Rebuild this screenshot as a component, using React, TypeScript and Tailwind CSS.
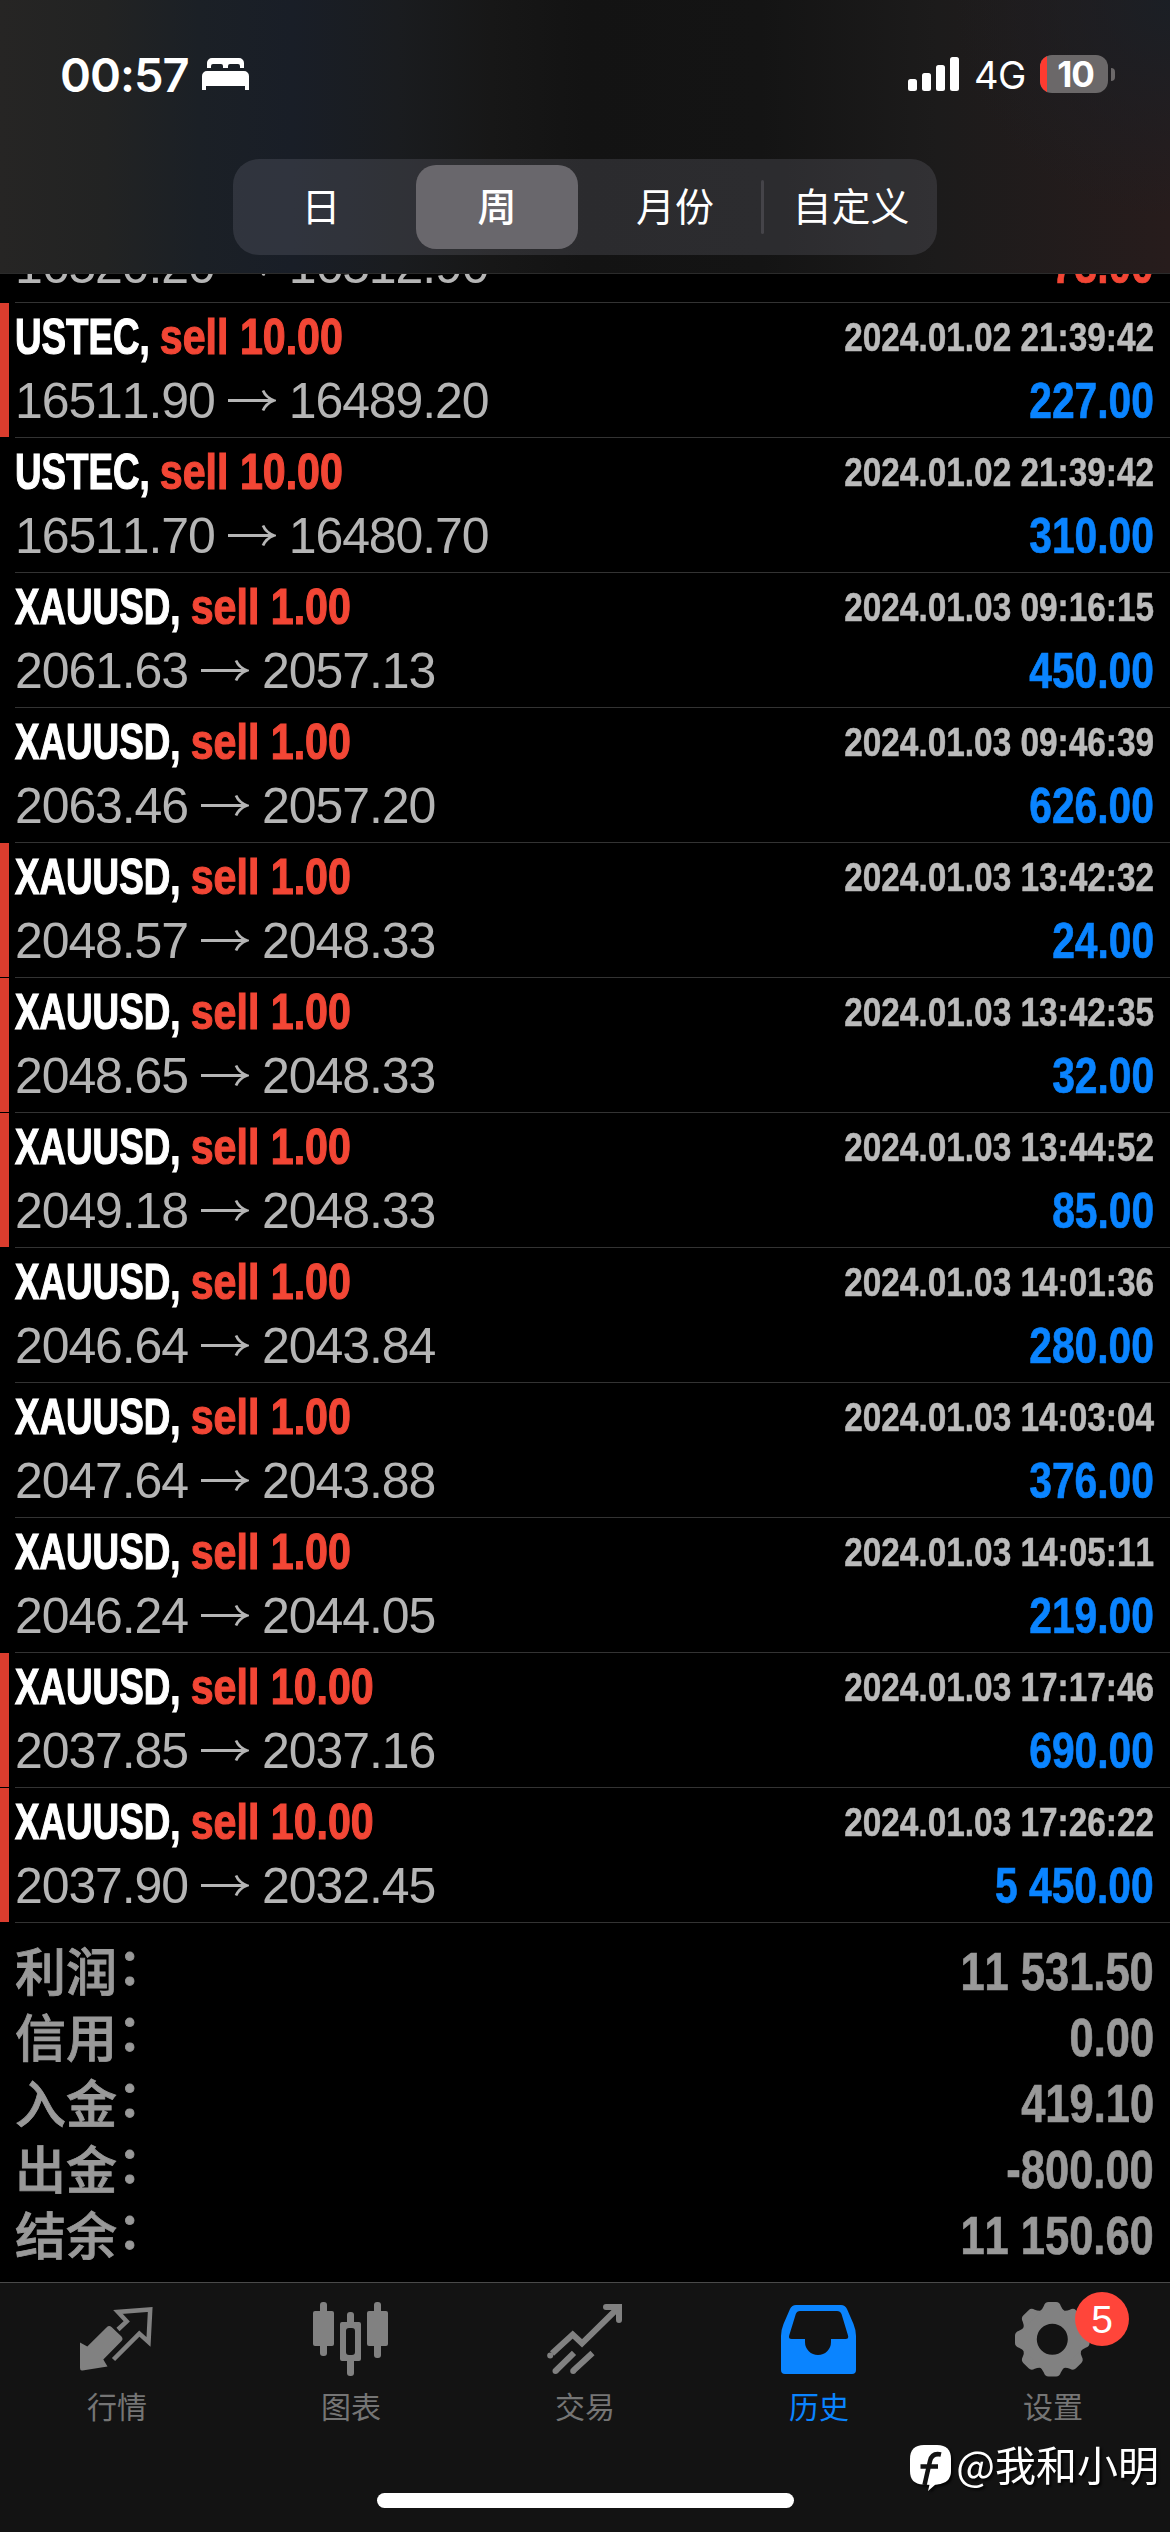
import React from 'react';

interface Deal {
  symbol: string;
  volume: string;
  open: string;
  close: string;
  time: string;
  profit: string;
  marked?: boolean;
}

const deals: Deal[] = [
  { symbol: 'USTEC', volume: '10.00', open: '16511.90', close: '16489.20', time: '2024.01.02 21:39:42', profit: '227.00', marked: true },
  { symbol: 'USTEC', volume: '10.00', open: '16511.70', close: '16480.70', time: '2024.01.02 21:39:42', profit: '310.00' },
  { symbol: 'XAUUSD', volume: '1.00', open: '2061.63', close: '2057.13', time: '2024.01.03 09:16:15', profit: '450.00' },
  { symbol: 'XAUUSD', volume: '1.00', open: '2063.46', close: '2057.20', time: '2024.01.03 09:46:39', profit: '626.00' },
  { symbol: 'XAUUSD', volume: '1.00', open: '2048.57', close: '2048.33', time: '2024.01.03 13:42:32', profit: '24.00', marked: true },
  { symbol: 'XAUUSD', volume: '1.00', open: '2048.65', close: '2048.33', time: '2024.01.03 13:42:35', profit: '32.00', marked: true },
  { symbol: 'XAUUSD', volume: '1.00', open: '2049.18', close: '2048.33', time: '2024.01.03 13:44:52', profit: '85.00', marked: true },
  { symbol: 'XAUUSD', volume: '1.00', open: '2046.64', close: '2043.84', time: '2024.01.03 14:01:36', profit: '280.00' },
  { symbol: 'XAUUSD', volume: '1.00', open: '2047.64', close: '2043.88', time: '2024.01.03 14:03:04', profit: '376.00' },
  { symbol: 'XAUUSD', volume: '1.00', open: '2046.24', close: '2044.05', time: '2024.01.03 14:05:11', profit: '219.00' },
  { symbol: 'XAUUSD', volume: '10.00', open: '2037.85', close: '2037.16', time: '2024.01.03 17:17:46', profit: '690.00', marked: true },
  { symbol: 'XAUUSD', volume: '10.00', open: '2037.90', close: '2032.45', time: '2024.01.03 17:26:22', profit: '5 450.00', marked: true },
];

const totals = [
  { label: '利润：', value: '11 531.50' },
  { label: '信用：', value: '0.00' },
  { label: '入金：', value: '419.10' },
  { label: '出金：', value: '-800.00' },
  { label: '结余：', value: '11 150.60' },
];

const periods = ['日', '周', '月份', '自定义'];

const StatusBar: React.FC = () => (
  <div className="flex h-[148px] items-center justify-between pl-[60px] pr-[55px]">
    <div className="flex items-center gap-[13px]">
      <span className="font-['Inter',sans-serif] text-[47px] font-semibold leading-none tracking-[-1px]">00:57</span>
      <svg className="h-[32px] w-[47px]" viewBox="0 0 47 32" fill="currentColor">
        <path d="M5 10V5a5 5 0 0 1 5-5h27a5 5 0 0 1 5 5v5h-4V8a2 2 0 0 0-2-2h-8a2 2 0 0 0-2 2v2h-5V8a2 2 0 0 0-2-2h-8a2 2 0 0 0-2 2v2z" />
        <path d="M0 32V18a5 5 0 0 1 5-5h37a5 5 0 0 1 5 5v14h-4v-4H4v4z" />
      </svg>
    </div>
    <div className="flex items-center">
      <svg className="h-[34px] w-[52px]" viewBox="0 0 52 34" fill="currentColor">
        <rect x="0" y="22" width="9" height="12" rx="2.5" />
        <rect x="14" y="16" width="9" height="18" rx="2.5" />
        <rect x="28" y="8" width="9" height="26" rx="2.5" />
        <rect x="42" y="0" width="9" height="34" rx="2.5" />
      </svg>
      <span className="ml-[14px] w-[66px] pt-[2px] font-['Inter',sans-serif] text-[38px] leading-none tracking-[-0.5px]">4G</span>
      <div className="flex h-[38px] w-[68px] overflow-hidden rounded-[12px] bg-[#6b6869]">
        <div className="w-[7px] bg-[#ff3b30]" />
        <span className="flex-1 pr-1 text-center font-['Inter',sans-serif] text-[35px] font-bold leading-[38px] tracking-[-1px]">10</span>
      </div>
      <div className="ml-[3px] h-[13px] w-[4px] rounded-r-full bg-[#6b6869]" />
    </div>
  </div>
);

const PeriodPicker: React.FC = () => (
  <div className="mx-auto mt-[11px] flex h-[96px] w-[704px] items-center rounded-[26px] bg-[#8e8e9c]/20 font-['Noto_Sans_CJK_SC',sans-serif] text-[39px]">
    {periods.map((p, i) => (
      <React.Fragment key={p}>
        {i === 3 && <div className="-mr-[3px] h-[54px] w-[3px] rounded-full bg-[#454449]" />}
        <div
          className={
            p === '周'
              ? 'mx-[7px] flex h-[84px] w-[162px] items-center justify-center rounded-[20px] bg-[#69676c] pb-[6px] font-medium'
              : i > 1
                ? 'flex w-[176px] items-center justify-center pb-[6px] pl-[4px]'
                : 'flex w-[176px] items-center justify-center pb-[6px]'
          }
        >
          {p}
        </div>
      </React.Fragment>
    ))}
  </div>
);

const Arrow: React.FC = () => (
  <svg className="mx-[13px] h-[24px] w-[48px]" viewBox="0 0 48 24" fill="none" stroke="currentColor" strokeWidth="2.8">
    <path d="M0 11.500H46M35 1.500Q38 8.500 46 11.500Q38 14.500 35 21.500" />
  </svg>
);

const PriceRow: React.FC<{ open: string; close: string; profit: string; loss?: boolean }> = ({ open, close, profit, loss }) => (
  <div className="flex h-[59px] items-center justify-between">
    <div className="flex items-center text-[50px] tracking-[-1.1px] text-[#b5b5b5]">
      <span>{open}</span>
      <Arrow />
      <span>{close}</span>
    </div>
    <span
      className={`origin-right scale-x-[.815] text-[50px] font-bold [-webkit-text-stroke:0.7px] ${loss ? 'text-[#f24635]' : 'text-[#0a84ff]'}`}
    >
      {profit}
    </span>
  </div>
);

const DealRow: React.FC<{ deal: Deal }> = ({ deal }) => (
  <div className="flex h-[135px]">
    <div className={`mb-px w-[9px] ${deal.marked ? 'bg-[#db3d2e]' : ''}`} />
    <div className="ml-[6px] flex-1 border-b border-[#333333] pr-[16px]">
      <div className="flex h-[68px] items-center justify-between font-bold">
        <div className="origin-left scale-x-[.735] whitespace-pre text-[50px] [-webkit-text-stroke:1.2px]">
          {deal.symbol},{' '}
          <span className="inline-block origin-left scale-x-[1.12] text-[#f24635]">sell {deal.volume}</span>
        </div>
        <span className="origin-right scale-x-[.824] text-[40.5px] text-[#bbbbbb] [-webkit-text-stroke:0.5px]">{deal.time}</span>
      </div>
      <PriceRow open={deal.open} close={deal.close} profit={deal.profit} />
    </div>
  </div>
);

const QuotesIcon = () => (
  <svg className="h-[80px] w-[80px]" viewBox="0 0 80 80">
    <path d="M3 42.500L10.300 46.500L29.500 27.500Q32 25 34.500 27L44.500 36.500Q46.500 39 44.500 41L26.300 59.500L30.500 66.500L5.500 70.500Q3 71 3 68z" fill="currentColor" />
    <path d="M41 29.500L49.700 21.300L41 12L73.200 9.500L71.500 42L62.300 33.700L36.500 59.500" fill="none" stroke="currentColor" strokeWidth="4.500" />
  </svg>
);

const ChartIcon = () => (
  <svg className="h-[80px] w-[80px]" viewBox="0 0 80 80" fill="currentColor">
    <rect x="9" y="2" width="7" height="54" rx="3" />
    <rect x="2" y="11" width="21" height="35" rx="2" />
    <rect x="36" y="12" width="7" height="14" rx="3" />
    <rect x="36" y="58" width="7" height="18" rx="3" />
    <path fillRule="evenodd" d="M31 22h17a2 2 0 0 1 2 2v35a2 2 0 0 1-2 2h-17a2 2 0 0 1-2-2v-35a2 2 0 0 1 2-2zM38 28a3 3 0 0 0-3 3v21a3 3 0 0 0 3 3h3a3 3 0 0 0 3-3v-21a3 3 0 0 0-3-3z" />
    <rect x="63" y="2" width="7" height="56" rx="3" />
    <rect x="56" y="11" width="21" height="35" rx="2" />
  </svg>
);

const TradeIcon = () => (
  <svg className="h-[80px] w-[80px]" viewBox="0 0 80 80" fill="none" stroke="currentColor" strokeWidth="6">
    <path d="M7 53.500L27.700 34.500L37 43.300L73 8" />
    <path d="M61 7H74V20" strokeLinecap="round" />
    <path d="M11 70.500L29 52.800M28.500 70.500L47.500 53" />
    <g fill="currentColor" stroke="none">
      <circle cx="5.200" cy="55.500" r="3" />
      <circle cx="10.500" cy="71" r="3" />
      <circle cx="28.200" cy="71" r="3" />
    </g>
  </svg>
);

const HistoryIcon = () => (
  <svg className="h-[80px] w-[80px]" viewBox="0 0 80 80" fill="currentColor" fillRule="evenodd">
    <path d="M17 5h45q4 0 6 4l6.500 15q2.500 6 2.500 12v34a4 4 0 0 1-4 4H6a4 4 0 0 1-4-4V36q0-6 2.500-12L11 9q2-4 6-4zM21 11q-3 0-4.200 3L10.200 35.500q-1 3.500 2.500 3.500H26v3a13 13 0 0 0 26 0v-3h14.500q3.500 0 2.500-3.500L62.500 14q-1.200-3-4.500-3z" />
  </svg>
);

const SettingsIcon = () => (
  <svg className="h-[80px] w-[80px]" viewBox="0 0 80 80">
    <circle cx="39.300" cy="39.300" r="23" fill="none" stroke="currentColor" strokeWidth="15" />
    {[0, 45, 90, 135, 180, 225, 270, 315].map((deg) => (
      <path
        key={deg}
        d="M26.500 11.500Q29.500 9.500 30.800 6Q32 2 35.500 2h7.600Q46.600 2 47.800 6Q49.100 9.500 52.100 11.500z"
        transform={`rotate(${deg} 39.3 39.3)`}
        fill="currentColor"
      />
    ))}
  </svg>
);

const tabs = [
  { label: '行情', icon: QuotesIcon },
  { label: '图表', icon: ChartIcon },
  { label: '交易', icon: TradeIcon },
  { label: '历史', icon: HistoryIcon, active: true },
  { label: '设置', icon: SettingsIcon, badge: 5 },
];

const TabBar: React.FC = () => (
  <nav className="flex h-[250px] flex-col border-t border-[#4a4a4a] bg-[#131313]">
    <div className="grid grid-cols-5 pt-[17px]">
      {tabs.map(({ label, icon: Icon, active, badge }) => (
        <div key={label} className={`flex flex-col items-center ${active ? 'text-[#0a84ff]' : 'text-[#818181]'}`}>
          <div className="relative">
            <Icon />
            {badge && (
              <span className="absolute left-[62px] top-[-8px] flex h-[54px] w-[54px] items-center justify-center rounded-full bg-[#ff453a] text-[39px] leading-none text-white">
                {badge}
              </span>
            )}
          </div>
          <span className={`mt-[3px] font-['Noto_Sans_CJK_SC',sans-serif] text-[30px] leading-[44px] ${active ? '' : 'text-[#757575]'}`}>{label}</span>
        </div>
      ))}
    </div>
    <div className="mx-auto mb-[24px] mt-auto h-[15px] w-[417px] rounded-full bg-white" />
  </nav>
);

const Watermark: React.FC = () => (
  <div className="absolute bottom-[36px] right-[11px] flex items-center gap-[5px] drop-shadow-[2px_2px_1px_rgba(0,0,0,0.8)]">
    <svg className="mt-[5px] h-[46px] w-[41px]" viewBox="0 0 41 46">
      <path d="M20.500 0Q41 0 41 20Q41 38 25.500 39.500L18 46L19.500 39.800Q0 39 0 20Q0 0 20.500 0z" fill="#fff" />
      <path d="M14 0H27Q41 0 41 14V26Q41 38 27 39.500H13Q0 39 0 26V14Q0 0 14 0z" fill="#fff" />
      <path d="M31 9.500Q22 7.500 20 16L14.500 40M10.500 21.500H28" fill="none" stroke="#131313" strokeWidth="4.500" />
    </svg>
    <span className="pb-[4px] font-['Noto_Sans_CJK_SC',sans-serif] text-[41px] leading-[58px]">@我和小明</span>
  </div>
);

const App: React.FC = () => {
  return (
    <div className="relative flex h-[2532px] w-[1170px] flex-col overflow-hidden bg-black font-['Liberation_Sans',Arial,sans-serif] leading-none text-white [font-kerning:none]">
      <header className="h-[274px] shrink-0 border-b border-[#2b2b2b] bg-[radial-gradient(circle_at_100%_0%,#1b1f25_0%,transparent_18%),linear-gradient(90deg,#262524_0%,#222323_9%,#1b2026_17%,#191e27_25%,#1a1c1f_34%,#171717_42%,#131313_50%,#141414_65%,#1c1b1b_80%,#271c1c_100%)]">
        <StatusBar />
        <PeriodPicker />
      </header>

      {/* Row scrolled halfway under the header */}
      <div className="flex h-[29px] shrink-0 flex-col justify-end overflow-hidden pl-[15px]">
        <div className="h-[67px] shrink-0 border-b border-[#333333] pr-[16px]">
          <PriceRow open="16520.20" close="16512.90" profit="-73.00" loss />
        </div>
      </div>

      {deals.map((deal, i) => (
        <DealRow key={i} deal={deal} />
      ))}

      <div className="flex-1 pl-[15px] pr-[16px] pt-[15px] text-[#999999]">
        {totals.map((t) => (
          <div key={t.label} className="flex h-[66px] items-center justify-between">
            <span className="pb-[5px] font-['Noto_Sans_CJK_SC',sans-serif] text-[51px] font-medium leading-[60px] [-webkit-text-stroke:0.8px]">
              {t.label.slice(0, -1)}
              <span className="inline-block -translate-y-[3px] font-['Noto_Sans_CJK_JP',sans-serif] [font-feature-settings:'halt']">
                {t.label.slice(-1)}
              </span>
            </span>
            <span className="origin-right scale-x-[.82] text-[53px] font-bold [-webkit-text-stroke:0.7px]">{t.value}</span>
          </div>
        ))}
      </div>

      <TabBar />
      <Watermark />
    </div>
  );
};

export default App;
